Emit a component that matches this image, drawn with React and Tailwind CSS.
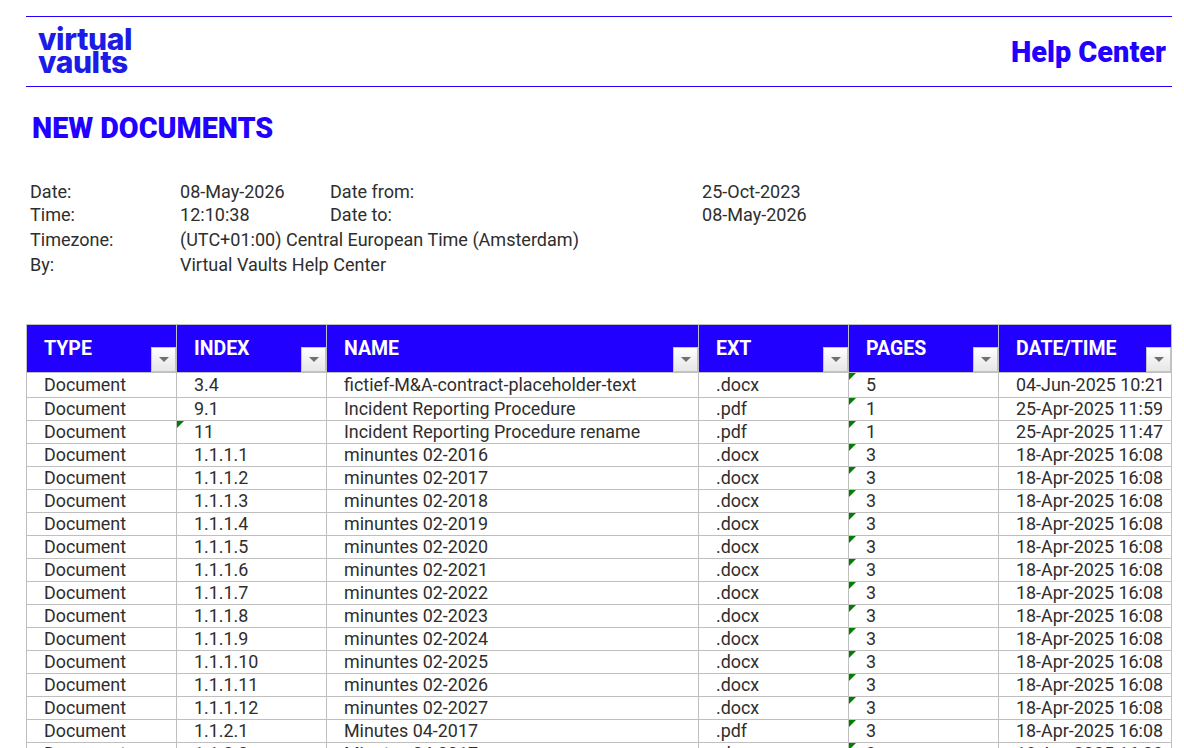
import React from 'react'

const columns = [
  { label: 'TYPE', width: 'w-[150px]' },
  { label: 'INDEX', width: 'w-[150px]' },
  { label: 'NAME', width: 'w-[372px]' },
  { label: 'EXT', width: 'w-[150px]' },
  { label: 'PAGES', width: 'w-[150px]' },
  { label: 'DATE/TIME', width: 'w-[173px]' },
]

const minutes = [
  ['1.1.1.1', 'minuntes 02-2016'],
  ['1.1.1.2', 'minuntes 02-2017'],
  ['1.1.1.3', 'minuntes 02-2018'],
  ['1.1.1.4', 'minuntes 02-2019'],
  ['1.1.1.5', 'minuntes 02-2020'],
  ['1.1.1.6', 'minuntes 02-2021'],
  ['1.1.1.7', 'minuntes 02-2022'],
  ['1.1.1.8', 'minuntes 02-2023'],
  ['1.1.1.9', 'minuntes 02-2024'],
  ['1.1.1.10', 'minuntes 02-2025'],
  ['1.1.1.11', 'minuntes 02-2026'],
  ['1.1.1.12', 'minuntes 02-2027'],
]

const rows = [
  { index: '3.4', name: 'fictief-M&A-contract-placeholder-text', ext: '.docx', pages: '5', date: '04-Jun-2025 10:21' },
  { index: '9.1', name: 'Incident Reporting Procedure', ext: '.pdf', pages: '1', date: '25-Apr-2025 11:59' },
  { index: '11', name: 'Incident Reporting Procedure rename', ext: '.pdf', pages: '1', date: '25-Apr-2025 11:47', flagIndex: true },
  ...minutes.map(([index, name]) => ({ index, name, ext: '.docx', pages: '3', date: '18-Apr-2025 16:08' })),
  { index: '1.1.2.1', name: 'Minutes 04-2017', ext: '.pdf', pages: '3', date: '18-Apr-2025 16:08' },
  { index: '1.1.2.2', name: 'Minutes 04-2017', ext: '.docx', pages: '3', date: '18-Apr-2025 16:08' },
]

const meta = [
  ['Date:', '08-May-2026', 'Date from:', '25-Oct-2023', 'h-[23px]'],
  ['Time:', '12:10:38', 'Date to:', '08-May-2026', 'h-[24px]'],
  ['Timezone:', '(UTC+01:00) Central European Time (Amsterdam)', '', '', 'h-[26px]'],
  ['By:', 'Virtual Vaults Help Center', '', '', 'h-[23px]'],
]

const Flag = () => (
  <span className="absolute left-0 top-0 w-0 h-0 border-t-[7px] border-r-[7px] border-t-[#008000] border-r-transparent"></span>
)

const FilterButton = () => (
  <span className="absolute right-0 bottom-0 w-[25px] h-[25px] flex items-center justify-center border border-[#c4c4c4] bg-gradient-to-b from-white to-[#e6e6e6]">
    <span className="w-0 h-0 border-x-[5px] border-t-[5px] border-x-transparent border-t-[#707070]"></span>
  </span>
)

const Cell = ({ children, flag }) => (
  <td className="relative border border-[#bfbfbf] pl-[17px] leading-none whitespace-nowrap">
    {flag && <Flag />}
    {children}
  </td>
)

const App = () => {
  return (
    <div className="h-[748px] w-[1184px] overflow-hidden bg-white pt-4 pl-[26px] text-[17.9px] text-[#2e2e2e] font-['Roboto',sans-serif]">
      <div className="w-[1146px] h-[71px] border-y border-[#2200ff] flex items-center justify-between pl-[12px] pr-[6px]">
        <div className="font-['Inter',sans-serif] font-extrabold text-[#1c1ce6] text-[30px] leading-[23px] tracking-[-0.4px] -mt-[1px]">
          <p>virtual</p>
          <p>vaults</p>
        </div>
        <p className="text-[#2200ff] font-black text-[28.9px] mt-[2px]">Help Center</p>
      </div>

      <h1 className="pl-[6px] mt-[22px] text-[#2200ff] font-black text-[28.7px] leading-[38px]">NEW DOCUMENTS</h1>

      <div className="mt-[33px] pl-[4px] text-[18.05px]">
        {meta.map(([a, b, c, d, height]) => (
          <div key={a} className={`flex items-center whitespace-nowrap ${height}`}>
            <span className="w-[150px]">{a}</span>
            <span className={c ? 'w-[150px]' : ''}>{b}</span>
            {c && <span className="w-[372px]">{c}</span>}
            {d && <span>{d}</span>}
          </div>
        ))}
      </div>

      <table className="mt-[48px] w-[1146px] table-fixed border-collapse">
        <thead>
          <tr className="h-[48px]">
            {columns.map((col) => (
              <th key={col.label} className={`relative ${col.width} border border-[#bfbfbf] bg-[#2200ff] pl-[17px] pt-[1px] text-left text-[19.5px] font-bold text-white`}>
                {col.label}
                <FilterButton />
              </th>
            ))}
          </tr>
        </thead>
        <tbody>
          {rows.map((row, i) => (
            <tr key={row.index} className={i === 0 ? 'h-[25px]' : 'h-[23px]'}>
              <Cell>Document</Cell>
              <Cell flag={row.flagIndex}>{row.index}</Cell>
              <Cell>{row.name}</Cell>
              <Cell>{row.ext}</Cell>
              <Cell flag>{row.pages}</Cell>
              <Cell>{row.date}</Cell>
            </tr>
          ))}
        </tbody>
      </table>
    </div>
  )
}

export default App
